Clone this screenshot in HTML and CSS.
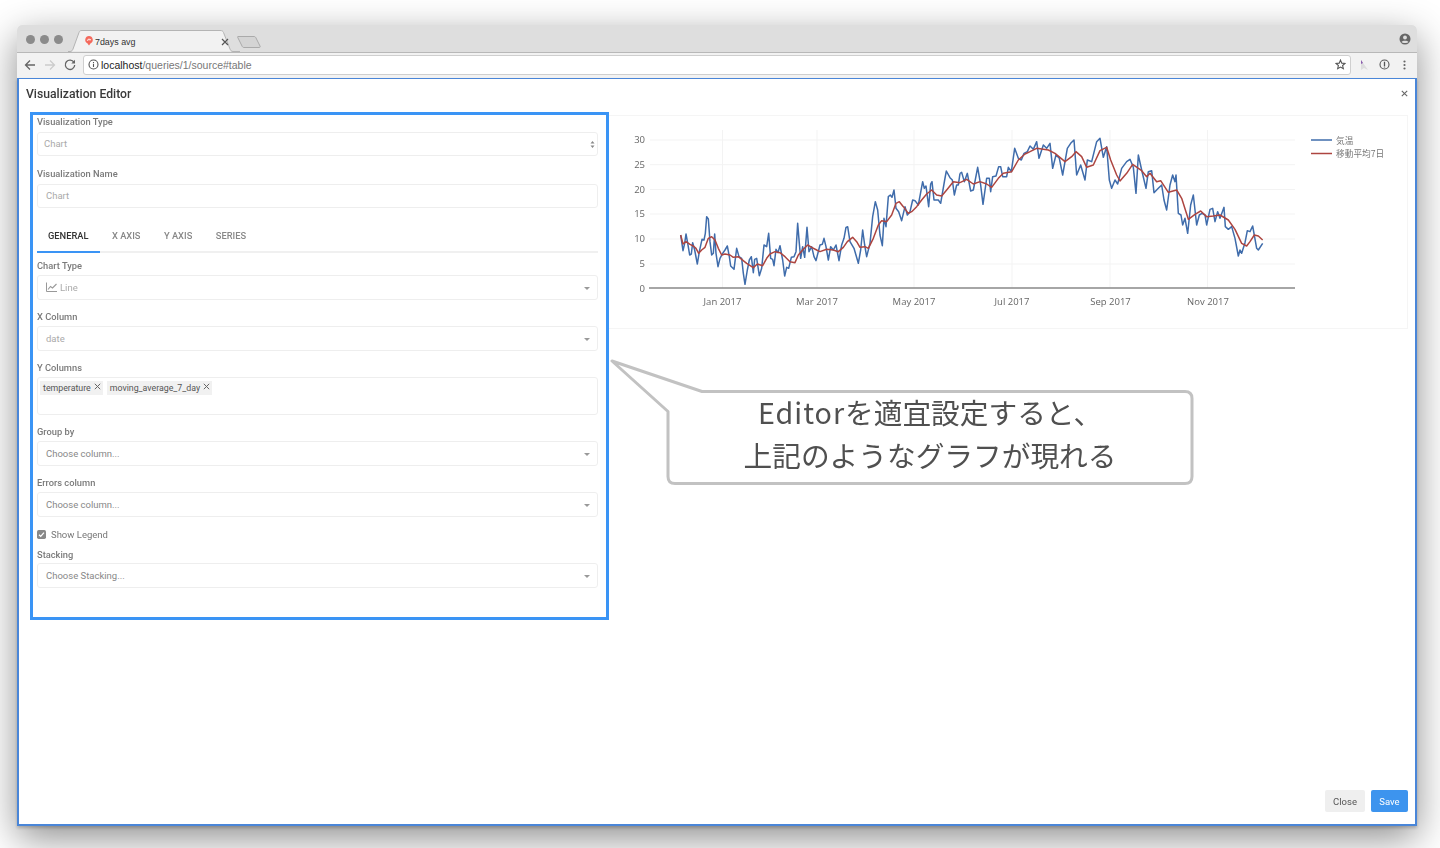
FILE: index.html
```html
<!DOCTYPE html>
<html lang="ja">
<head>
<meta charset="utf-8">
<title>7days avg</title>
<link rel="stylesheet" href="styles.css">
</head>
<body>
<div class="browser">
  <div class="titlebar">
    <div class="lights"><i></i><i></i><i></i></div>
    <div class="tab">
      <svg class="tab-shape" width="172" height="22" viewBox="0 0 172 22"><path d="M0 21.5H2C4 21.5 4.5 20 5 19L11 2.5C11.500 1 12 .5 14 .5H152C154 .5 155 1 155.500 2.500L162 19C162.500 20 163 21.500 165 21.500H172" fill="#f2f2f2" stroke="#b4b4b4"/></svg>
      <svg class="favicon" width="10" height="11" viewBox="0 0 12 13"><path d="M6 1a4.600 4.600 0 0 1 2 8.700L6 12.500 4 9.700A4.600 4.600 0 0 1 6 1z" fill="#f4695c"/><path d="M3.500 6.200 5 6.200 5.300 4.800 6.700 4.800 7 6.200 8.500 5" fill="none" stroke="#fff" stroke-width="1"/></svg>
      <span class="tab-title">7days avg</span>
      <svg class="tab-close" width="8" height="8" viewBox="0 0 8 8"><path d="M1 1l6 6M7 1l-6 6" stroke="#555" stroke-width="1.200"/></svg>
    </div>
    <svg class="newtab" width="26" height="14" viewBox="0 0 26 14"><path d="M1 1.500H17C18 1.500 18.500 2 19 3L23 11C23.500 12 23 12.500 22 12.500H7C6 12.500 5.500 12 5 11L1 3C.5 2 .5 1.500 1 1.500z" fill="#d4d4d4" stroke="#aaa"/></svg>
    <svg class="account" width="12" height="12" viewBox="0 0 12 12"><circle cx="6" cy="6" r="5.500" fill="#666"/><circle cx="6" cy="4.500" r="1.900" fill="#ddd"/><path d="M2.500 9C3.500 7.400 8.500 7.400 9.500 9 8.500 10.300 3.500 10.300 2.500 9z" fill="#ddd"/></svg>
  </div>
  <div class="toolbar">
    <svg class="nav" width="12" height="12" viewBox="0 0 12 12"><path d="M11 6H2M6 1.500 1.500 6 6 10.500" fill="none" stroke="#666" stroke-width="1.300"/></svg>
    <svg class="nav" width="12" height="12" viewBox="0 0 12 12"><path d="M1 6H10M6 1.500 10.500 6 6 10.500" fill="none" stroke="#ccc" stroke-width="1.300"/></svg>
    <svg class="nav" width="12" height="12" viewBox="0 0 12 12"><path d="M10 3.300A4.700 4.700 0 1 0 10.700 6" fill="none" stroke="#666" stroke-width="1.300"/><path d="M11 .8V4.500H7.300z" fill="#666"/></svg>
    <div class="omnibox">
      <svg class="info" width="11" height="11" viewBox="0 0 11 11"><circle cx="5.500" cy="5.500" r="4.500" fill="none" stroke="#555" stroke-width="1.100"/><path d="M5.500 4.800V8M5.500 3V3.900" stroke="#555" stroke-width="1.100"/></svg>
      <span class="url"><b>localhost</b>/queries/1/source#table</span>
      <svg class="star" width="11" height="11" viewBox="0 0 12 12"><path d="M6 1.200 7.400 4.500 11 4.800 8.300 7.100 9.100 10.600 6 8.800 2.900 10.600 3.700 7.100 1 4.800 4.600 4.500z" fill="none" stroke="#555" stroke-width="1.200"/></svg>
    </div>
    <svg class="ext ext-cursor" width="10" height="12" viewBox="0 0 10 12"><path d="M2 1 9 11 5 9 2 11z" fill="#ddd"/><path d="M2 1 4 4 2 5z" fill="#8a5cae"/></svg>
    <svg class="ext ext-pw" width="11" height="11" viewBox="0 0 11 11"><circle cx="5.500" cy="5.500" r="4.500" fill="none" stroke="#555" stroke-width="1.100"/><path d="M5.500 2.800V7M5.500 7.500V8.500" stroke="#555" stroke-width="1.300"/></svg>
    <svg class="ext ext-menu" width="3" height="10" viewBox="0 0 3 10"><circle cx="1.500" cy="1.500" r="1.100" fill="#666"/><circle cx="1.500" cy="5" r="1.100" fill="#666"/><circle cx="1.500" cy="8.500" r="1.100" fill="#666"/></svg>
  </div>

  <div class="modal">
    <header class="modal-header">
      <h1>Visualization Editor</h1>
      <svg class="modal-x" width="7" height="7" viewBox="0 0 7 7"><path d="M.8.8l5.400 5.400M6.200.8.8 6.200" stroke="#666" stroke-width="1.100"/></svg>
    </header>
    <div class="modal-body">
      <form class="editor">
        <div class="field first">
          <label>Visualization Type</label>
          <div class="control tight">Chart
            <svg class="updown" width="5" height="9" viewBox="0 0 5 9"><path d="M.5 3.500 2.500 1 4.500 3.500zM.5 5.500 2.500 8 4.500 5.500z" fill="#888"/></svg>
          </div>
        </div>
        <div class="field first">
          <label>Visualization Name</label>
          <div class="control">Chart</div>
        </div>
        <nav class="tabs">
          <span class="active">GENERAL</span><span>X AXIS</span><span>Y AXIS</span><span>SERIES</span>
        </nav>
        <div class="field">
          <label>Chart Type</label>
          <div class="control select"><svg class="line-icon" width="11" height="10" viewBox="0 0 11 10"><path d="M.5 .5V9.500H11" fill="none" stroke="#999"/><path d="M2 7.500 4.500 4.500 6.500 6 10.500 2" fill="none" stroke="#999" stroke-width="1.100"/></svg>Line</div>
        </div>
        <div class="field">
          <label>X Column</label>
          <div class="control select">date</div>
        </div>
        <div class="field">
          <label>Y Columns</label>
          <div class="control tags">
            <span class="tag">temperature<svg width="7" height="7" viewBox="0 0 7 7"><path d="M.8.8l5.400 5.400M6.200.8.8 6.200" stroke="#666"/></svg></span>
            <span class="tag">moving_average_7_day<svg width="7" height="7" viewBox="0 0 7 7"><path d="M.8.8l5.400 5.400M6.200.8.8 6.200" stroke="#666"/></svg></span>
          </div>
        </div>
        <div class="field">
          <label>Group by</label>
          <div class="control select dim">Choose column...</div>
        </div>
        <div class="field">
          <label>Errors column</label>
          <div class="control select dim">Choose column...</div>
        </div>
        <div class="check">
          <svg width="9" height="9" viewBox="0 0 8 8"><rect width="8" height="8" rx="1.500" fill="#888"/><path d="M1.800 4.200 3.300 5.700 6.200 2.300" fill="none" stroke="#fff" stroke-width="1.100"/></svg>
          <span>Show Legend</span>
        </div>
        <div class="field last">
          <label>Stacking</label>
          <div class="control select dim">Choose Stacking...</div>
        </div>
      </form>

      <section class="chart-panel">
        <svg class="chart" width="799" height="214" viewBox="609 115 799 214">
          <g class="grid">
            <path d="M650 140H1295M650 164.700H1295M650 189.500H1295M650 214H1295M650 239H1295M650 264H1295"/>
            <path d="M722.500 130V288M817 130V288M914 130V288M1012 130V288M1110 130V288M1207.500 130V288"/>
          </g>
          <path class="axis" d="M649 288H1295"/>
          <g class="ylabels">
            <text x="645" y="143">30</text><text x="645" y="167.500">25</text><text x="645" y="192.500">20</text><text x="645" y="217">15</text><text x="645" y="242">10</text><text x="645" y="267">5</text><text x="645" y="291.500">0</text>
          </g>
          <g class="xlabels">
            <text x="722.500" y="305">Jan 2017</text><text x="817" y="305">Mar 2017</text><text x="914" y="305">May 2017</text><text x="1012" y="305">Jul 2017</text><text x="1110.500" y="305">Sep 2017</text><text x="1208" y="305">Nov 2017</text>
          </g>
          <g transform="translate(610 110) scale(.33333)">
            <polyline class="blue" points="212,375 219,422 224,400 228,372 234,405 239,435 244,432 248,398 254,420 262,462 268,425 276,388 282,390 286,370 290,320 295,327 300,395 305,435 310,430 314,372 318,430 324,470 330,445 338,430 345,420 352,408 358,440 362,468 372,478 380,415 387,440 395,445 400,490 405,523 412,480 418,450 424,440 430,488 434,448 440,445 448,497 455,475 462,405 470,410 476,370 482,445 488,448 492,467 498,418 504,428 510,407 518,450 524,498 530,472 536,475 544,442 552,440 558,425 563,340 568,400 572,445 578,410 584,442 591,352 597,425 605,410 612,440 618,452 630,405 637,403 642,385 648,410 655,450 662,410 670,420 678,405 687,452 695,405 702,385 708,352 713,350 720,395 732,415 745,460 752,420 758,360 764,405 770,440 780,400 788,320 796,275 803,300 810,375 817,407 822,325 828,350 835,260 841,255 846,262 852,240 858,295 866,305 875,332 885,290 892,315 900,305 908,270 915,272 925,285 938,215 943,235 948,228 956,290 962,222 966,215 972,270 985,270 992,280 1004,210 1009,183 1020,203 1027,210 1033,255 1040,225 1045,225 1050,190"/>
          </g>
          <g transform="translate(950 110) scale(.33333)">
            <polyline class="blue" points="30,190 35,187 43,215 52,190 62,243 70,240 83,172 92,225 99,283 110,205 118,205 122,245 128,200 138,198 146,170 152,170 158,200 170,200 175,172 184,185 194,115 205,145 214,150 222,130 232,125 240,108 250,118 260,95 267,145 280,105 290,115 300,100 308,175 318,135 328,145 338,195 352,115 362,100 372,90 380,195 392,165 405,210 412,150 425,155 440,95 450,85 460,142 470,110 478,210 485,235 495,210 503,222 515,175 530,155 540,148 550,172 558,250 565,135 575,180 588,235 595,185 605,182 612,248 625,235 635,225 642,270 650,300 660,225 668,195 675,215 678,195 685,310 693,315 698,345 705,325 713,370 722,285 730,255 740,345 748,315 756,310 765,315 770,345 780,298 788,295 795,335 803,305 810,325 822,292 826,350 835,358 845,350 855,385 865,438 870,420 875,430 885,398 892,362 900,365 908,348 920,415 925,420 938,400"/>
          </g>
          <g transform="translate(610 110) scale(.33333)">
            <polyline class="red" points="212,375 219,402 228,395 240,403 250,408 258,415 266,430 275,420 285,412 295,385 305,380 315,390 325,415 335,435 345,432 360,435 370,442 385,440 395,448 410,460 430,473 442,462 458,467 470,445 480,432 495,425 510,428 525,440 540,455 555,458 565,435 580,418 593,405 605,412 620,420 630,425 650,418 670,420 685,425 700,412 712,395 728,382 740,395 750,412 765,410 775,415 790,385 805,345 815,332 830,335 845,315 858,280 868,275 880,290 895,310 905,305 920,290 935,270 950,252 965,240 980,255 995,258 1010,240 1030,215 1050,218"/>
          </g>
          <g transform="translate(950 110) scale(.33333)">
            <polyline class="red" points="30,218 50,208 70,222 90,215 110,222 125,232 145,205 160,190 185,185 205,150 225,132 240,125 260,115 295,120 315,130 345,155 365,140 378,125 395,140 410,172 430,165 450,122 470,112 482,150 500,195 510,213 530,190 548,163 575,182 590,200 600,190 620,215 632,212 655,247 680,240 695,265 715,328 735,313 752,303 770,320 790,318 810,315 835,330 855,358 875,400 890,408 900,395 913,375 925,378 938,390"/>
          </g>
          <path class="blue" d="M1311 140H1332"/>
          <path class="red" d="M1311 153.500H1332"/>
          <text class="legend" x="1336" y="143.500">気温</text>
          <text class="legend" x="1336" y="157">移動平均7日</text>
        </svg>
      </section>
    </div>
    <footer class="modal-footer">
      <button type="button" class="btn">Close</button>
      <button type="button" class="btn primary">Save</button>
    </footer>

    <div class="callout">
      <svg class="callout-shape" width="590" height="132" viewBox="0 0 590 132"><path d="M2 2 92 32.500H575Q582 32.500 582 39.500V117.500Q582 124.500 575 124.500H65Q58 124.500 58 117.500V52.500z" fill="#fff" stroke="#c2c2c2" stroke-width="3" stroke-linejoin="round"/></svg>
      <p><span class="latin">Editor</span>を適宜設定すると、<br>上記のようなグラフが現れる</p>
    </div>
  </div>
</div>
</body>
</html>
```

FILE: styles.css
```css
* { box-sizing: border-box; }
html, body { margin: 0; height: 100%; }
body {
  background: #fff;
  overflow: hidden;
  padding: 25px 23px 22px 17px;
  font-family: Roboto, "Liberation Sans", sans-serif;
}
.browser {
  height: 801px;
  display: flex;
  flex-direction: column;
  border-radius: 5px 5px 0 0;
  box-shadow: 0 12px 38px rgba(0, 0, 0, .45);
  filter: blur(.4px);
}
.titlebar {
  height: 27px;
  flex: none;
  background: #dedede;
  border-radius: 5px 5px 0 0;
  display: flex;
  align-items: center;
  position: relative;
}
.lights { display: flex; gap: 5px; margin-left: 8.5px; margin-top: 2px; }
.lights i { width: 9px; height: 9px; border-radius: 50%; background: #8b8b8b; display: block; }
.tab { position: absolute; left: 51px; top: 5px; width: 172px; height: 22px; }
.tab-shape { position: absolute; left: 0; top: 0; }
.favicon { position: absolute; left: 16px; top: 5px; }
.tab-title { position: absolute; left: 27px; top: 5px; font: 8.900px/14px "Liberation Sans", sans-serif; color: #333; }
.tab-close { position: absolute; left: 153px; top: 8px; }
.newtab { position: absolute; left: 220px; top: 10px; }
.account { position: absolute; right: 6px; top: 8px; }
.toolbar {
  height: 26px;
  flex: none;
  background: #f2f2f2;
  border-top: 1px solid #b8b8b8;
  display: flex;
  align-items: center;
  padding: 0 0 2px 7px;
}
.nav { margin-right: 8px; flex: none; }
.omnibox {
  width: 1268px;
  height: 20px;
  margin-left: -1px;
  background: #fff;
  border: 1px solid #cfcfcf;
  border-radius: 3px;
  display: flex;
  align-items: center;
  padding: 0 4px;
}
.info { margin-right: 2px; flex: none; }
.url { font: 10.500px "Liberation Sans", sans-serif; color: #777; flex: 1; }
.url b { font-weight: normal; color: #222; }
.star { margin-right: 0; }
.ext { flex: none; }
.ext-cursor { margin-left: 8px; }
.ext-pw { margin-left: 10px; }
.ext-menu { margin-left: 13px; }

.modal {
  flex: 1;
  position: relative;
  background: #fff;
  border: 2px solid #4a86d8;
  border-top-width: 1.500px;
  display: flex;
  flex-direction: column;
  box-shadow: 0 2px 3px rgba(0,0,0,.2);
}
.modal-header {
  height: 32.500px;
  flex: none;
  display: flex;
  align-items: center;
  justify-content: space-between;
  padding: 0 7px 3px 7px;
}
.modal-header h1 { margin: 0; font-size: 12.200px; font-weight: 500; color: #3a3a3a; }
.modal-x { margin-top: -1px; }
.modal-body { display: flex; align-items: flex-start; padding-left: 11px; padding-right: 7px; }
.editor {
  width: 579px;
  height: 508px;
  flex: none;
  border: 3px solid #3a94f5;
  padding: 0 8px 0 4px;
}
label { display: block; height: 13px; line-height: 13px; font-size: 9.300px; font-weight: 500; color: #7a7a7a; margin-bottom: 3px; }
.field { margin-bottom: 10px; }
.field.first { margin-bottom: 11px; }
.field.first label { margin-bottom: 4px; }
.field.first .control { height: 24px; }
.field.last label { margin-bottom: 2px; }
.control {
  position: relative;
  height: 25px;
  border: 1px solid #eee;
  border-radius: 3px;
  background: #fff;
  padding: 0 8px;
  display: flex;
  align-items: center;
  font-size: 9.500px;
  color: #aaa;
}
.control.tight { padding-left: 6px; }
.control.dim { color: #888; }
.updown { position: absolute; right: 2.500px; top: 7px; }
.select::after {
  content: "";
  position: absolute;
  right: 7px;
  top: 11px;
  border: 3px solid transparent;
  border-top: 3px solid #999;
  border-bottom: 0;
}
.line-icon { margin-right: 3px; }
.tabs {
  margin-top: 14px;
  margin-bottom: 6px;
  height: 31px;
  border-bottom: 2px solid #f0f0f0;
  display: flex;
  gap: 1px;
}
.tabs span {
  padding: 0 11.500px 0 11px;
  line-height: 27px;
  font-size: 9.300px;
  font-weight: 500;
  color: #888;
  height: 31px;
}
.tabs .active { color: #333; border-bottom: 2px solid #3a94f5; }
.control.tags { height: 38px; align-items: flex-start; padding: 3px 2px 2px; gap: 4px; }
.tag {
  height: 14px;
  padding: 0 2px 0 3px;
  background: #f1f1f1;
  color: #555;
  font-size: 8.800px;
  line-height: 14px;
  display: flex;
  align-items: center;
  gap: 3px;
}
.tag svg { margin-top: -3px; }
.check { height: 13px; display: flex; align-items: center; gap: 5px; margin: 11px 0 7px; font-size: 9.500px; color: #777; }
.chart-panel {
  flex: 1;
  min-width: 0;
  height: 214px;
  margin-top: 3px;
  border: 1px solid #f5f5f5;
  border-left: 0;
}
.chart { display: block; margin-top: -1px; }
.chart .grid path { fill: none; stroke: #f3f3f3; stroke-width: 1; }
.chart .axis { fill: none; stroke: #888; stroke-width: 1.300; }
.chart text { font-family: "Open Sans", "Noto Sans CJK JP", sans-serif; font-size: 9.500px; fill: #666; }
.ylabels text { text-anchor: end; }
.xlabels text { text-anchor: middle; }
.chart .blue { fill: none; stroke: #3f6cab; stroke-width: 1.500; stroke-linejoin: round; }
.chart g .blue { stroke-width: 4.500; }
.chart .red { fill: none; stroke: #ad4540; stroke-width: 1.500; stroke-linejoin: round; }
.chart g .red { stroke-width: 4.500; }
.chart .legend { font-family: "Noto Sans CJK JP", sans-serif; font-size: 8.700px; fill: #777; }
.modal-footer {
  margin-top: auto;
  display: flex;
  justify-content: flex-end;
  gap: 6px;
  padding: 0 7px 12px 0;
}
.btn {
  height: 22px;
  border: 0;
  border-radius: 2px;
  padding: 0;
  width: 40px;
  background: #efefef;
  color: #555;
  font: 400 9.500px Roboto, sans-serif;
}
.btn.primary { width: 37px; background: #3d94ee; color: #fff; }
.callout {
  position: absolute;
  left: 591px;
  top: 280px;
  width: 590px;
  height: 132px;
}
.callout-shape { position: absolute; left: 0; top: 0; }
.callout p {
  position: absolute;
  left: 58px;
  top: 31px;
  width: 524px;
  margin: 0;
  text-align: center;
  font-family: "Noto Sans CJK JP", sans-serif;
  font-weight: 400;
  font-size: 28.700px;
  line-height: 43px;
  color: #505050;
}
.callout .latin { letter-spacing: 1px; }
```
